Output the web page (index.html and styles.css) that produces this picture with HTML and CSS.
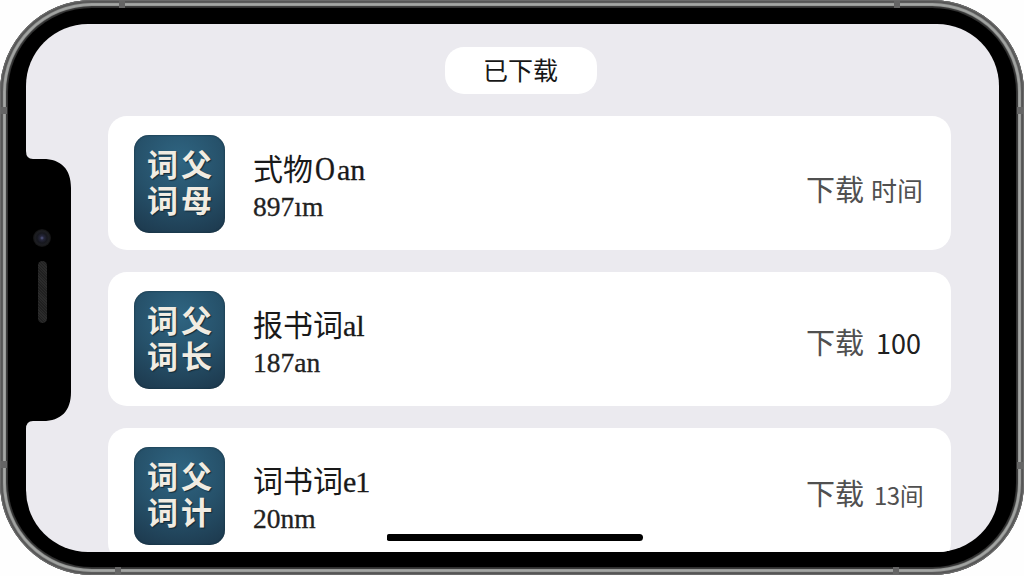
FILE: index.html
```
<!DOCTYPE html>
<html lang="zh-CN">
	<head>
		<meta charset="utf-8">
		<title>已下载</title>
		<link rel="stylesheet" href="styles.css">
	</head>
	<body>
		<div class="phone">
			<span class="band band_top_left"></span>
			<span class="band band_top_right"></span>
			<span class="band band_bottom_left"></span>
			<span class="band band_bottom_right"></span>
			<span class="band band_left_top"></span>
			<span class="band band_left_bottom"></span>
			<span class="band band_right_top"></span>
			<span class="band band_right_bottom"></span>
			<div class="bezel">
				<div class="screen">
					<h1 class="screen_title">已下载</h1>
					<div class="list">
						<div class="card">
							<div class="app_icon"><span>词</span><span>父</span><span>词</span><span>母</span></div>
							<div class="info">
								<p class="name">式物<span class="latin"><span class="narrow">O</span>an</span></p>
								<p class="size">897ım</p>
							</div>
							<p class="status">下载<span class="value">时间</span></p>
						</div>
						<div class="card">
							<div class="app_icon"><span>词</span><span>父</span><span>词</span><span>长</span></div>
							<div class="info">
								<p class="name">报书词<span class="latin">al</span></p>
								<p class="size">187an</p>
							</div>
							<p class="status status_second">下载<span class="value value_number">100</span></p>
						</div>
						<div class="card">
							<div class="app_icon"><span>词</span><span>父</span><span>词</span><span>计</span></div>
							<div class="info">
								<p class="name">词书词<span class="latin latin_tight">e1</span></p>
								<p class="size">20nm</p>
							</div>
							<p class="status status_third">下载<span class="value value_mixed">13间</span></p>
						</div>
					</div>
				</div>
			</div>
			<svg class="notch" width="48" height="300" viewBox="0 0 48 300">
				<path d="M0 0H1V11Q1 19 8 19H18C36 19 46 29 46 48V252C46 271 36 281 18 281H8Q1 281 1 289V300H0Z"/>
			</svg>
			<span class="camera"></span>
			<span class="speaker"></span>
			<span class="home_bar"></span>
		</div>
	</body>
</html>
```
FILE: styles.css
```
*	{
	box-sizing: border-box;
}
body	{
	margin: 0;
	height: 576px;
	overflow: hidden;
	background: #fefefe;
	font-family: "Noto Sans CJK SC", sans-serif;
}
h1, p	{
	margin: 0;
	font-weight: normal;
}
.phone	{
	position: relative;
	width: 1024px;
	height: 575px;
	padding: 8px;
	border-radius: 92px;
	background: #303030;
	box-shadow: inset 0 0 0 1px #6a6a6a, inset 0 0 1px 3px #555555, inset 0 0 1px 6px #a4a6a4;
}
.bezel	{
	height: 100%;
	padding: 16px 17px 15px 18px;
	border-radius: 84px;
	background: black;
}
.screen	{
	display: flex;
	flex-direction: column;
	align-items: center;
	height: 100%;
	padding: 23px 48px 0 82px;
	overflow: hidden;
	border-radius: 62px;
	background: #ebeaef;
}
.screen_title	{
	flex: none;
	width: 152px;
	height: 47px;
	margin-right: 18px;
	border-radius: 19px;
	background: white;
	font-size: 25px;
	line-height: 45px;
	text-align: center;
	color: #171717;
}
.list	{
	display: flex;
	flex-direction: column;
	gap: 22px;
	width: 100%;
	margin-top: 22px;
}
.card	{
	display: flex;
	height: 134px;
	padding: 19px 28px 0 26px;
	border-radius: 19px;
	background: white;
}
.app_icon	{
	display: grid;
	grid-template-columns: 34px 34px;
	grid-template-rows: 36px 36px;
	place-content: center;
	width: 91px;
	height: 98px;
	border-radius: 15px;
	background: radial-gradient(circle at 50% 25%, #2f6582, #26516a 50%, #1c374b);
	box-shadow: inset 0 0 2px #122a38;
	font-family: "Liberation Serif", "Noto Sans CJK SC", serif;
	font-size: 31px;
	font-weight: bold;
	line-height: 36px;
	text-align: center;
	color: #f1ece2;
	text-shadow: 1px 1px 1px #142a36;
}
.info	{
	flex: 1;
	margin-left: 28px;
}
.name	{
	height: 36px;
	padding-top: 14px;
	font-size: 30px;
	line-height: 36px;
	white-space: nowrap;
	color: #191919;
}
.latin	{
	font-family: "Liberation Serif", serif;
	-webkit-text-stroke: 0.3px #191919;
}
.latin_tight	{
	letter-spacing: -1px;
}
.narrow	{
	display: inline-block;
	width: 22px;
	margin-left: 2px;
	transform: scale(0.92, 1.1);
	transform-origin: left 75%;
}
.size	{
	margin-top: 19px;
	font-family: "Liberation Serif", serif;
	font-size: 27.5px;
	line-height: 34px;
	color: #222222;
	-webkit-text-stroke: 0.3px #222222;
}
.status	{
	display: flex;
	align-items: baseline;
	width: 117px;
	padding-top: 35px;
	font-size: 29px;
	line-height: 36px;
	white-space: nowrap;
	color: #505050;
}
.status_second	{
	padding-top: 32px;
}
.status_third	{
	padding-top: 27px;
}
.value	{
	margin-left: 7px;
	font-size: 26px;
}
.value_number	{
	margin-left: 12px;
	font-size: 27px;
	color: #202020;
}
.value_mixed	{
	margin-left: 10px;
	font-size: 24px;
	letter-spacing: -0.5px;
}
.notch	{
	position: absolute;
	left: 25px;
	top: 140px;
}
.camera	{
	position: absolute;
	left: 33px;
	top: 229px;
	width: 18px;
	height: 18px;
	border-radius: 50%;
	background: radial-gradient(circle, #575b88 0, #25263a 2px, #16171d 5px, #1d1e22 7px, #111111 9px);
}
.speaker	{
	position: absolute;
	left: 38px;
	top: 261px;
	width: 9px;
	height: 62px;
	border-radius: 5px;
	background: repeating-linear-gradient(45deg, #202020 0, #202020 1px, #2b2b2b 1px, #2b2b2b 2px);
}
.home_bar	{
	position: absolute;
	left: 387px;
	top: 534px;
	width: 256px;
	height: 7px;
	border-radius: 2px 4px 4px 2px;
	background: black;
}
.band	{
	position: absolute;
	width: 6px;
	height: 7px;
	background: #656565;
}
.band_top_left	{
	left: 119px;
	top: 1px;
}
.band_top_right	{
	left: 894px;
	top: 1px;
}
.band_bottom_left	{
	left: 115px;
	bottom: 1px;
}
.band_bottom_right	{
	left: 893px;
	bottom: 1px;
}
.band_left_top	{
	left: 1px;
	top: 107px;
}
.band_left_bottom	{
	left: 1px;
	top: 461px;
}
.band_right_top	{
	right: 1px;
	top: 107px;
}
.band_right_bottom	{
	right: 1px;
	top: 462px;
}
```
